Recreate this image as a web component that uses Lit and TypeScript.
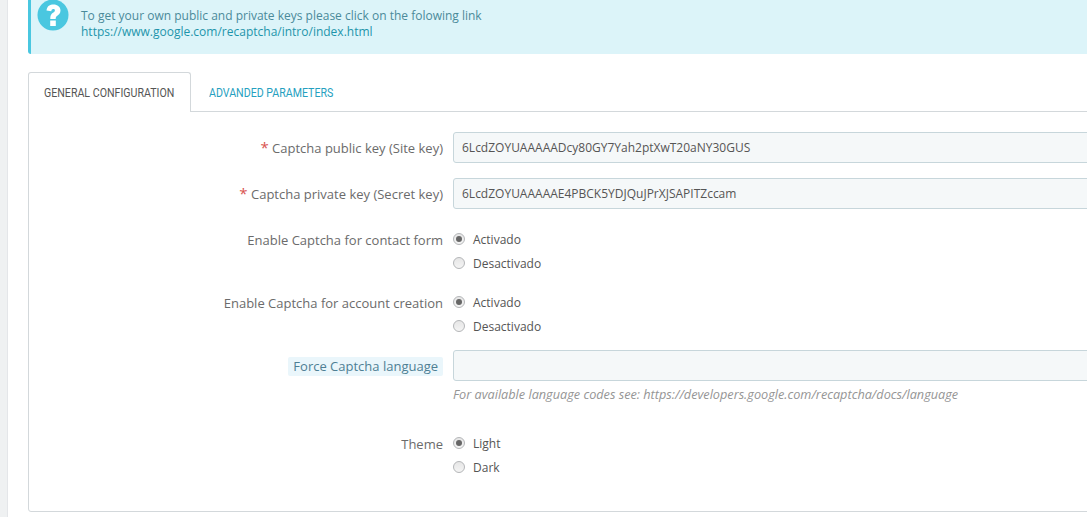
import { LitElement, html, css } from "lit";
import { customElement } from "lit/decorators.js";

@customElement("app-root")
export class AppRoot extends LitElement {
  static styles = css`
    :host { display: block; width: 1087px; height: 517px; overflow: hidden; background: #fff; font-family: "Open Sans", sans-serif; font-size: 12px; color: #555; }
    .page { display: flex; height: 517px; }
    .strip { flex: none; width: 7px; background: #eff1f2; border-right: 1px solid #e4e6e9; }
    .main { flex: none; width: 1079px; padding-left: 20px; box-sizing: border-box; }
    .alert { display: flex; height: 54px; box-sizing: border-box; background: #dcf4f9; border-left: 3px solid #4ac7e0; border-bottom-left-radius: 3px; color: #1e94ab; font-size: 12px; line-height: 16px; margin-bottom: 18px; padding-left: 6px; }
    .alert svg { flex: none; margin-top: -1px; width: 32px; height: 32px; }
    .alert p { margin: 8px 0 0 12px; }
    .alert .t { color: #4a8a9a; display: block; }
    .alert a { color: #1e94ab; text-decoration: none; display: block; }
    .tabs { display: flex; height: 40px; position: relative; z-index: 1; }
    .tab { font-family: "Roboto", sans-serif; font-size: 12.5px; line-height: 40px; box-sizing: border-box; height: 40px; text-transform: uppercase; white-space: nowrap; }
    .tab span { display: inline-block; transform: scaleX(0.85); transform-origin: left center; }
    .tab.on { width: 163px; padding-left: 15px; color: #555; background: #fff; border: 1px solid #d3d8db; border-bottom: 0; border-radius: 3px 3px 0 0; }
    .tab.off { color: #25a0c0; padding-left: 18px; line-height: 41px; }
    .panel { margin-top: -1px; margin-right: -10px; height: 401px; box-sizing: border-box; border: 1px solid #d3d8db; border-radius: 0 0 0 3px; padding-top: 20px; }
    .row { display: flex; align-items: flex-start; }
    .lab { flex: none; width: 414px; text-align: right; font-size: 13px; line-height: 30px; color: #6b6b6b; white-space: nowrap; }
    .lab.flag { display: flex; justify-content: flex-end; padding-top: 7px; }
    .req { color: #d9534f; font-size: 15px; }
    .hl { display: block; background: #eaf6fb; color: #4e7f94; padding: 0 5px; line-height: 19px; border-radius: 2px; }
    .ctl { margin-left: 10px; flex: 1; min-width: 0; }
    .inp { height: 31px; box-sizing: border-box; border: 1px solid #c7d6db; border-radius: 3px; background: #f5f8f9; padding-left: 8px; line-height: 29px; font-size: 12px; color: #555; white-space: nowrap; }
    .opt { display: flex; align-items: center; height: 24px; font-size: 12px; color: #555; }
    .radio { width: 12px; height: 12px; box-sizing: border-box; border-radius: 50%; border: 1px solid #b4b6b8; background: linear-gradient(#e6e6e6, #f4f4f4); margin-right: 8px; display: flex; align-items: center; justify-content: center; }
    .radio i { display: block; width: 6px; height: 6px; border-radius: 50%; background: #666; }
    .hint { font-style: italic; font-size: 12.7px; line-height: 17px; color: #959595; margin-top: 5px; white-space: nowrap; }
    .gap-key { margin-top: 15px; }
    .gap-contact { margin-top: 18px; }
    .gap-account { margin-top: 15px; }
    .gap-lang { margin-top: 12px; }
    .gap-theme { margin-top: 28px; }
    .mid { line-height: 27px; }
  `;

  private radios(a: string, b: string) {
    return html`<div class="ctl">
      <div class="opt"><span class="radio"><i></i></span>${a}</div>
      <div class="opt"><span class="radio"></span>${b}</div>
    </div>`;
  }

  render() {
    return html`<div class="page">
      <div class="strip"></div>
      <div class="main">
        <div class="alert">
          <svg viewBox="0 0 32 32" aria-hidden="true">
            <circle cx="16" cy="16" r="15.5" fill="#4ac7e0"/>
            <path d="M9.500 11.500C10 7 13 5.500 16.500 5.500C20.500 5.500 23.500 8 23.500 11.500C23.500 14.500 21.500 15.800 20 17C19 17.800 18.700 18.300 18.700 20H13.300V18.800C13.300 16 14.500 14.800 16 13.700C17.200 12.900 17.900 12.400 17.900 11.500C17.900 10.600 17.200 10.100 16.300 10.100C15.100 10.100 14.500 10.900 14.300 12.300ZM13.200 21.600H18.800V27H13.200Z" fill="#fff"/>
          </svg>
          <p><span class="t">To get your own public and private keys please click on the folowing link</span><a>https://www.google.com/recaptcha/intro/index.html</a></p>
        </div>
        <div class="tabs">
          <div class="tab on"><span>General configuration</span></div>
          <div class="tab off"><span>Advanded parameters</span></div>
        </div>
        <div class="panel">
          <div class="row">
            <div class="lab"><span class="req">*</span> Captcha public key (Site key)</div>
            <div class="ctl"><div class="inp">6LcdZOYUAAAAADcy80GY7Yah2ptXwT20aNY30GUS</div></div>
          </div>
          <div class="row gap-key">
            <div class="lab"><span class="req">*</span> Captcha private key (Secret key)</div>
            <div class="ctl"><div class="inp">6LcdZOYUAAAAAE4PBCK5YDJQuJPrXJSAPITZccam</div></div>
          </div>
          <div class="row gap-contact">
            <div class="lab mid">Enable Captcha for contact form</div>
            ${this.radios("Activado", "Desactivado")}
          </div>
          <div class="row gap-account">
            <div class="lab mid">Enable Captcha for account creation</div>
            ${this.radios("Activado", "Desactivado")}
          </div>
          <div class="row gap-lang">
            <div class="lab flag"><span class="hl">Force Captcha language</span></div>
            <div class="ctl">
              <div class="inp"></div>
              <div class="hint">For available language codes see: https://developers.google.com/recaptcha/docs/language</div>
            </div>
          </div>
          <div class="row gap-theme">
            <div class="lab mid">Theme</div>
            ${this.radios("Light", "Dark")}
          </div>
        </div>
      </div>
    </div>`;
  }
}
